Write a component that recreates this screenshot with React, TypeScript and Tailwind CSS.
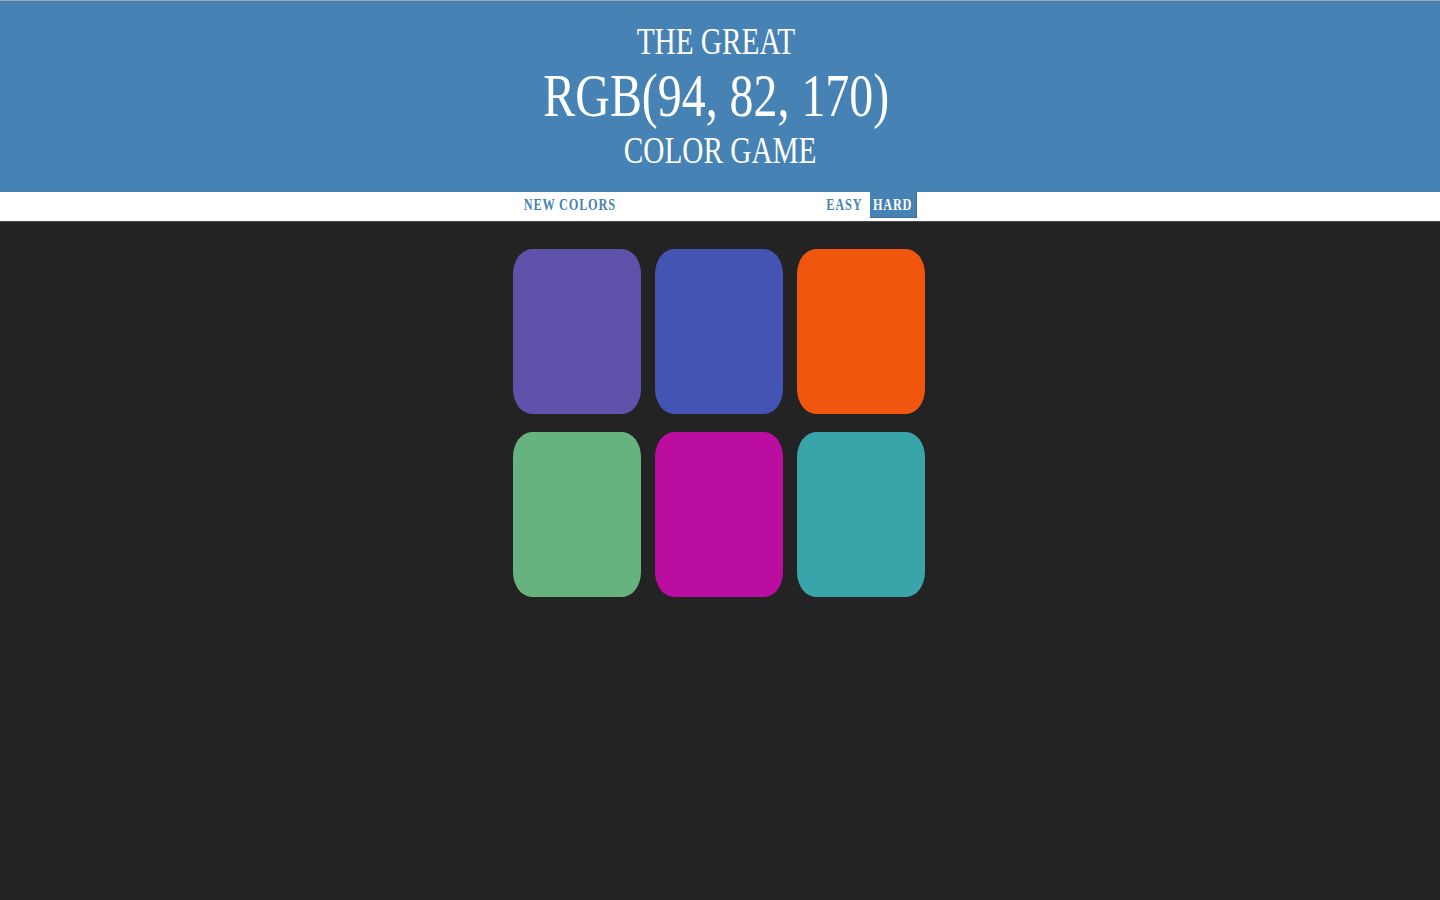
import React from "react";

const serif = { fontFamily: '"Liberation Serif", "Times New Roman", serif' };

function Squeeze({
  children,
  className = "",
  inner = "scale-x-[0.77]",
}: {
  children: React.ReactNode;
  className?: string;
  inner?: string;
}) {
  return (
    <div className={"flex justify-center " + className}>
      <span className={"block whitespace-nowrap " + inner}>{children}</span>
    </div>
  );
}

const colors = [
  "rgb(94, 82, 170)",
  "rgb(68, 84, 179)",
  "rgb(240, 86, 13)",
  "rgb(102, 179, 128)",
  "rgb(187, 13, 159)",
  "rgb(58, 164, 171)",
];

export default function App() {
  return (
    <div className="min-h-[900px] bg-[#232323]" style={serif}>
      <div className="border-t border-[#a6a6a6] bg-[#4682b4] pt-[19px] pb-[21px] text-white font-normal">
        <Squeeze className="h-[42px] leading-[42px] text-[38px] pr-[8px]">THE GREAT</Squeeze>
        <Squeeze className="h-[67px] leading-[67px] text-[61px] pr-[8px]" inner="scale-x-[0.785]">
          RGB(94, 82, 170)
        </Squeeze>
        <Squeeze className="h-[42px] leading-[42px] text-[38px]">COLOR GAME</Squeeze>
      </div>
      <div className="h-[30px] bg-white border-b border-[#4a4a4a]">
        <div className="mx-auto w-[394px] pl-[2px] flex items-start text-[16px] font-bold tracking-[1px] text-[#4682b4] uppercase">
          <Squeeze className="h-[26px] w-[90px] items-center">New Colors</Squeeze>
          <div className="flex-1" />
          <Squeeze className="h-[26px] w-[35px] items-center">Easy</Squeeze>
          <Squeeze className="ml-[8px] h-[26px] w-[47px] items-center bg-[#4682b4] text-white border-b border-r border-[#3b6f9c]">
            Hard
          </Squeeze>
        </div>
      </div>
      <div className="mx-auto mt-[27px] w-[414px] grid grid-cols-[128px_128px_128px] gap-x-[14px] gap-y-[18px]">
        {colors.map((c) => (
          <div
            key={c}
            className="h-[165px] rounded-[19px_/_25px]"
            style={{ backgroundColor: c }}
          />
        ))}
      </div>
    </div>
  );
}
